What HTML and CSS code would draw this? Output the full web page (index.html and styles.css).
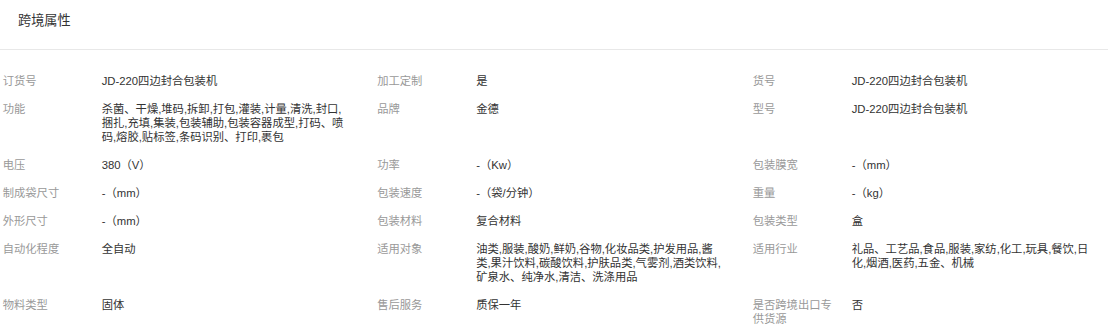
FILE: index.html
```html
<!DOCTYPE html>
<html lang="zh-CN">
<head>
<meta charset="utf-8">
<title>跨境属性</title>
<link rel="stylesheet" href="styles.css">
</head>
<body>
<section class="panel">
  <div class="panel-head">跨境属性</div>
  <div class="attrs">
    <div class="attr"><span class="label">订货号</span><span class="value">JD-220四边封合包装机</span></div>
    <div class="attr"><span class="label">加工定制</span><span class="value">是</span></div>
    <div class="attr"><span class="label">货号</span><span class="value">JD-220四边封合包装机</span></div>

    <div class="attr"><span class="label">功能</span><span class="value">杀菌、干燥,堆码,拆卸,打包,灌装,计量,清洗,封口,捆扎,充填,集装,包装辅助,包装容器成型,打码、喷码,熔胶,贴标签,条码识别、打印,裹包</span></div>
    <div class="attr"><span class="label">品牌</span><span class="value">金德</span></div>
    <div class="attr"><span class="label">型号</span><span class="value">JD-220四边封合包装机</span></div>

    <div class="attr"><span class="label">电压</span><span class="value">380（V）</span></div>
    <div class="attr"><span class="label">功率</span><span class="value">-（Kw）</span></div>
    <div class="attr"><span class="label">包装膜宽</span><span class="value">-（mm）</span></div>

    <div class="attr"><span class="label">制成袋尺寸</span><span class="value">-（mm）</span></div>
    <div class="attr"><span class="label">包装速度</span><span class="value">-（袋/分钟）</span></div>
    <div class="attr"><span class="label">重量</span><span class="value">-（kg）</span></div>

    <div class="attr"><span class="label">外形尺寸</span><span class="value">-（mm）</span></div>
    <div class="attr"><span class="label">包装材料</span><span class="value">复合材料</span></div>
    <div class="attr"><span class="label">包装类型</span><span class="value">盒</span></div>

    <div class="attr"><span class="label">自动化程度</span><span class="value">全自动</span></div>
    <div class="attr"><span class="label">适用对象</span><span class="value">油类,服装,酸奶,鲜奶,谷物,化妆品类,护发用品,酱类,果汁饮料,碳酸饮料,护肤品类,气雾剂,酒类饮料,矿泉水、纯净水,清洁、洗涤用品</span></div>
    <div class="attr"><span class="label">适用行业</span><span class="value">礼品、工艺品,食品,服装,家纺,化工,玩具,餐饮,日化,烟酒,医药,五金、机械</span></div>

    <div class="attr"><span class="label">物料类型</span><span class="value">固体</span></div>
    <div class="attr"><span class="label">售后服务</span><span class="value">质保一年</span></div>
    <div class="attr"><span class="label">是否跨境出口专供货源</span><span class="value">否</span></div>
  </div>
</section>
</body>
</html>
```

FILE: styles.css
```css
html, body {
  margin: 0;
  padding: 0;
  background: #fff;
}

body {
  font-family: "Liberation Sans", "Noto Sans CJK SC", sans-serif;
  color: #333;
}

.panel-head {
  height: 38px;
  padding: 11px 18px 0;
  line-height: 20px;
  font-size: 13.2px;
  color: #333;
  border-bottom: 1px solid #e8e8e8;
}

.attrs {
  display: grid;
  grid-template-columns: 374.5px 375.5px 1fr;
  padding: 17px 0 0 2.7px;
  font-size: 11.3px;
  line-height: 14px;
}

.attr {
  display: flex;
  align-items: flex-start;
  padding: 7px 0;
}

.label {
  flex: 0 0 87px;
  padding-right: 12px;
  color: #999;
}

.value {
  flex: 0 0 247px;
  color: #333;
  word-break: break-all;
}
```
